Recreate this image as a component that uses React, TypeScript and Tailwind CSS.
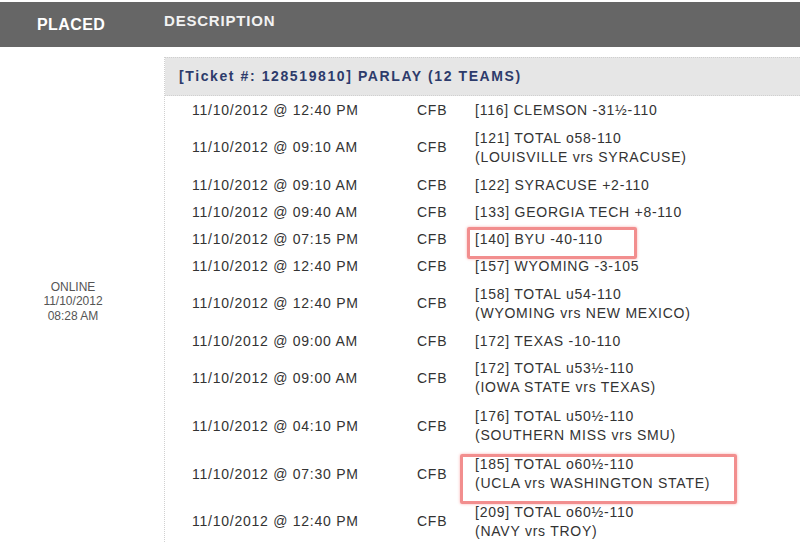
const rows = [
  { time: '12:40 PM', lines: ['[116] CLEMSON -31½-110'] },
  { time: '09:10 AM', lines: ['[121] TOTAL o58-110', '(LOUISVILLE vrs SYRACUSE)'] },
  { time: '09:10 AM', lines: ['[122] SYRACUSE +2-110'] },
  { time: '09:40 AM', lines: ['[133] GEORGIA TECH +8-110'] },
  { time: '07:15 PM', lines: ['[140] BYU -40-110'], mark: 'small' },
  { time: '12:40 PM', lines: ['[157] WYOMING -3-105'] },
  { time: '12:40 PM', lines: ['[158] TOTAL u54-110', '(WYOMING vrs NEW MEXICO)'] },
  { time: '09:00 AM', lines: ['[172] TEXAS -10-110'] },
  { time: '09:00 AM', lines: ['[172] TOTAL u53½-110', '(IOWA STATE vrs TEXAS)'] },
  { time: '04:10 PM', lines: ['[176] TOTAL u50½-110', '(SOUTHERN MISS vrs SMU)'] },
  { time: '07:30 PM', lines: ['[185] TOTAL o60½-110', '(UCLA vrs WASHINGTON STATE)'], mark: 'large' },
  { time: '12:40 PM', lines: ['[209] TOTAL o60½-110', '(NAVY vrs TROY)'] },
]

function Row({ time, lines, mark }: { time: string; lines: string[]; mark?: string }) {
  const double = lines.length > 1
  return (
    <div className={`flex items-center leading-[19px] ${double ? 'py-[4.9px]' : 'py-[4px]'}`}>
      <div className="w-[252px] pl-[27px]">11/10/2012 @ {time}</div>
      <div className="w-[58px]">CFB</div>
      <div className="relative flex-1">
        {lines.map((l) => (
          <div key={l} className="whitespace-nowrap">{l}</div>
        ))}
        {/* red annotation boxes from the screenshot */}
        {mark === 'small' && (
          <div className="absolute left-[-8px] top-[-2.5px] w-[170px] h-[32px] rounded-[2px] border-[3px] border-[#f28e8e] shadow-[0_0_3px_#f9b0b0]" />
        )}
        {mark === 'large' && (
          <div className="absolute left-[-15px] top-[-1.5px] w-[277px] h-[50px] rounded-[2px] border-[3px] border-[#f28e8e] shadow-[0_0_3px_#f9b0b0]" />
        )}
      </div>
    </div>
  )
}

export default function App() {
  return (
    <div className="w-[800px] h-[543px] overflow-hidden bg-white font-['Liberation_Sans',Arial,sans-serif]">
      <div className="mt-[2px] h-[45px] bg-[#666666] flex items-center font-bold">
        <div className="w-[164px] pl-[37px] text-[16px] tracking-[0.4px] text-white">PLACED</div>
        <div className="pb-[6px] text-[15px] tracking-[0.8px] text-[#f2f2f2]">DESCRIPTION</div>
      </div>

      <div className="mt-[10px] flex">
        <div className="w-[164px] pr-[18px] flex items-center justify-center text-center text-[12px] leading-[14.5px] text-[#555]">
          <div>
            ONLINE<br />11/10/2012<br />08:28 AM
          </div>
        </div>

        <div className="flex-1 border-l border-dotted border-[#d0d0d0]">
          <div className="h-[39px] flex items-center pl-[14px] bg-[#e6e6e6] border-t border-dotted border-t-[#cfcfcf] border-b border-b-[#d0d0d0] text-[14px] font-bold tracking-[1.6px] text-[#2d3b6b]">
            [Ticket #: 128519810] PARLAY (12 TEAMS)
          </div>
          <div className="pt-[1px] text-[14px] tracking-[0.75px] text-[#333]">
            {rows.map((r, i) => (
              <Row key={i} {...r} />
            ))}
          </div>
        </div>
      </div>
    </div>
  )
}
